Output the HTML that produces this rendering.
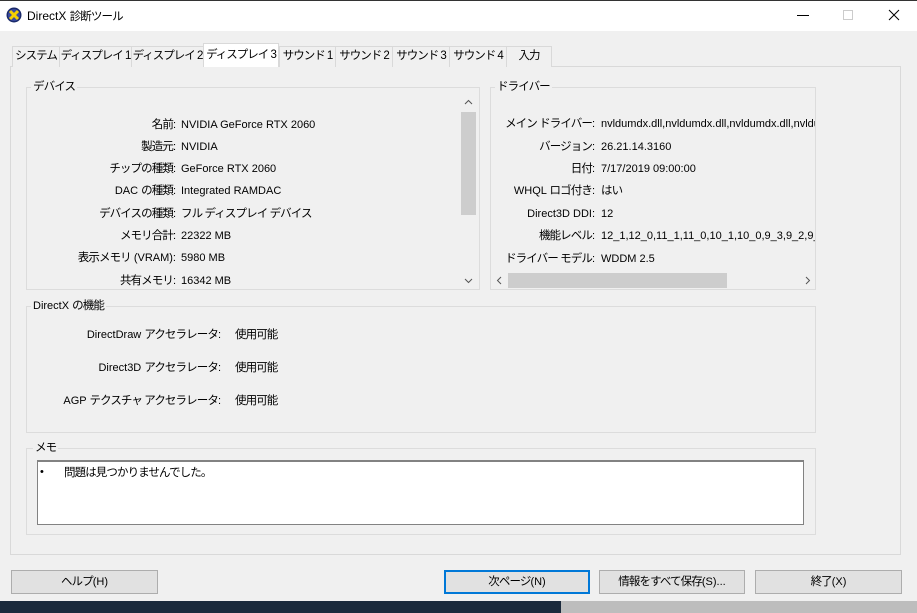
<!DOCTYPE html>
<html><head><meta charset="utf-8"><style>
*{margin:0;padding:0;box-sizing:border-box}
body{width:917px;height:613px;overflow:hidden;background:#f0f0f0;font-family:"Liberation Sans","Noto Sans CJK JP",sans-serif;font-size:11px;color:#000;position:relative}
.a{position:absolute;white-space:nowrap;line-height:15px}
.j{font-size:11.5px;letter-spacing:-0.9px}
.title{left:0;top:0;width:917px;height:31px;background:#fff;border-top:1px solid #333}
.tab{top:46px;height:21px;border:1px solid #d9d9d9;border-bottom:none;background:#f0f0f0;line-height:19px;text-align:center;font-size:11.5px;letter-spacing:-1px}
.panel{left:10px;top:66px;width:891px;height:489px;border:1px solid #d9d9d9;background:#f0f0f0}
.grp{border:1px solid #dcdcdc}
.lg{background:#f0f0f0;padding:0 2px;line-height:14px}
.lab{text-align:right;width:170px}
.btn{top:570px;height:24px;border:1px solid #adadad;background:#e1e1e1;text-align:center;line-height:22px}
</style></head><body>
<div class="a title"></div>
<svg class="a" style="left:6px;top:7px" width="16" height="16" viewBox="0 0 16 16"><circle cx="8" cy="8" r="7.5" fill="#1a2a6a"/><circle cx="8" cy="8" r="6" fill="#3a4aa0"/><path d="M4 4L12 12M12 4L4 12" stroke="#f5d000" stroke-width="3"/></svg>
<div class="a" style="left:27px;top:9px;font-size:12px">DirectX <span class="j">診断ツール</span></div>
<div class="a" style="left:797px;top:15px;width:12px;height:1px;background:#000"></div>
<div class="a" style="left:843px;top:10px;width:10px;height:10px;border:1px solid #ccc"></div>
<svg class="a" style="left:888px;top:9px" width="12" height="12"><path d="M1 1L11 11M11 1L1 11" stroke="#000" stroke-width="1"/></svg>

<div class="a panel"></div>
<div class="a tab" style="left:12px;width:48px">システム</div>
<div class="a tab" style="left:59px;width:73px">ディスプレイ 1</div>
<div class="a tab" style="left:131px;width:73px">ディスプレイ 2</div>
<div class="a tab" style="left:203px;top:43px;height:24px;width:76px;background:#fff;line-height:22px">ディスプレイ 3</div>
<div class="a tab" style="left:279px;width:57px">サウンド 1</div>
<div class="a tab" style="left:335px;width:58px">サウンド 2</div>
<div class="a tab" style="left:392px;width:58px">サウンド 3</div>
<div class="a tab" style="left:449px;width:58px">サウンド 4</div>
<div class="a tab" style="left:506px;width:46px">入力</div>

<div class="a grp" style="left:26px;top:87px;width:454px;height:203px"></div>
<div class="a lg j" style="left:31px;top:80px">デバイス</div>
<div class="a" style="left:460px;top:95px;width:17px;height:194px;background:#f0f0f0"></div>
<div class="a" style="left:461px;top:112px;width:15px;height:103px;background:#cdcdcd"></div>
<svg class="a" style="left:464px;top:99px" width="9" height="6"><path d="M1 5L4.5 1.5L8 5" stroke="#555" fill="none"/></svg>
<svg class="a" style="left:464px;top:278px" width="9" height="6"><path d="M1 1L4.5 4.5L8 1" stroke="#555" fill="none"/></svg>
<div class="a lab" style="left:6px;top:118px"><span class="j">名前</span>:</div><div class="a" style="left:181px;top:118px">NVIDIA GeForce RTX 2060</div>
<div class="a lab" style="left:6px;top:140px"><span class="j">製造元</span>:</div><div class="a" style="left:181px;top:140px">NVIDIA</div>
<div class="a lab" style="left:6px;top:162px"><span class="j">チップの種類</span>:</div><div class="a" style="left:181px;top:162px">GeForce RTX 2060</div>
<div class="a lab" style="left:6px;top:184px">DAC <span class="j">の種類</span>:</div><div class="a" style="left:181px;top:184px">Integrated RAMDAC</div>
<div class="a lab" style="left:6px;top:207px"><span class="j">デバイスの種類</span>:</div><div class="a j" style="left:181px;top:207px">フル ディスプレイ デバイス</div>
<div class="a lab" style="left:6px;top:229px"><span class="j">メモリ合計</span>:</div><div class="a" style="left:181px;top:229px">22322 MB</div>
<div class="a lab" style="left:6px;top:251px"><span class="j">表示メモリ</span> (VRAM):</div><div class="a" style="left:181px;top:251px">5980 MB</div>
<div class="a lab" style="left:6px;top:274px"><span class="j">共有メモリ</span>:</div><div class="a" style="left:181px;top:274px">16342 MB</div>

<div class="a grp" style="left:490px;top:87px;width:326px;height:203px"></div>
<div class="a lg j" style="left:495px;top:80px">ドライバー</div>
<div class="a" style="left:491px;top:95px;width:324px;height:176px;overflow:hidden">
<div class="a lab" style="left:-66px;top:22px"><span class="j">メイン ドライバー</span>:</div><div class="a" style="left:110px;top:22px">nvldumdx.dll,nvldumdx.dll,nvldumdx.dll,nvldumdx.dll</div>
<div class="a lab" style="left:-66px;top:45px"><span class="j">バージョン</span>:</div><div class="a" style="left:110px;top:45px">26.21.14.3160</div>
<div class="a lab" style="left:-66px;top:67px"><span class="j">日付</span>:</div><div class="a" style="left:110px;top:67px">7/17/2019 09:00:00</div>
<div class="a lab" style="left:-66px;top:89px">WHQL <span class="j">ロゴ付き</span>:</div><div class="a j" style="left:110px;top:89px">はい</div>
<div class="a lab" style="left:-66px;top:112px">Direct3D DDI:</div><div class="a" style="left:110px;top:112px">12</div>
<div class="a lab" style="left:-66px;top:134px"><span class="j">機能レベル</span>:</div><div class="a" style="left:110px;top:134px">12_1,12_0,11_1,11_0,10_1,10_0,9_3,9_2,9_1</div>
<div class="a lab" style="left:-66px;top:157px"><span class="j">ドライバー モデル</span>:</div><div class="a" style="left:110px;top:157px">WDDM 2.5</div>
</div>
<div class="a" style="left:491px;top:272px;width:324px;height:17px;background:#f0f0f0"></div>
<div class="a" style="left:508px;top:273px;width:219px;height:15px;background:#cdcdcd"></div>
<svg class="a" style="left:496px;top:276px" width="6" height="9"><path d="M5 1L1.5 4.5L5 8" stroke="#555" fill="none"/></svg>
<svg class="a" style="left:805px;top:276px" width="6" height="9"><path d="M1 1L4.5 4.5L1 8" stroke="#555" fill="none"/></svg>

<div class="a grp" style="left:26px;top:306px;width:790px;height:127px"></div>
<div class="a lg" style="left:31px;top:299px">DirectX <span class="j">の機能</span></div>
<div class="a" style="left:0;top:328px;width:221px;text-align:right">DirectDraw <span class="j">アクセラレータ</span>:</div><div class="a j" style="left:235px;top:328px">使用可能</div>
<div class="a" style="left:0;top:361px;width:221px;text-align:right">Direct3D <span class="j">アクセラレータ</span>:</div><div class="a j" style="left:235px;top:361px">使用可能</div>
<div class="a" style="left:0;top:394px;width:221px;text-align:right">AGP <span class="j">テクスチャ アクセラレータ</span>:</div><div class="a j" style="left:235px;top:394px">使用可能</div>

<div class="a grp" style="left:26px;top:448px;width:790px;height:87px"></div>
<div class="a lg j" style="left:33px;top:441px">メモ</div>
<div class="a" style="left:37px;top:460px;width:767px;height:65px;background:#fff;border:1px solid #828282;border-top:2px solid #828282"></div>
<div class="a" style="left:40px;top:465px">•</div>
<div class="a j" style="left:64px;top:466px">問題は見つかりませんでした。</div>

<div class="a btn" style="left:11px;width:147px;line-height:22px"><span class="j">ヘルプ</span>(H)</div>
<div class="a btn" style="left:444px;width:146px;border:2px solid #0078d7;line-height:20px"><span class="j">次ページ</span>(N)</div>
<div class="a btn" style="left:599px;width:146px;line-height:22px"><span class="j">情報をすべて保存</span>(S)...</div>
<div class="a btn" style="left:755px;width:147px;line-height:22px"><span class="j">終了</span>(X)</div>

<div class="a" style="left:0;top:601px;width:561px;height:12px;background:#1b2a3c"></div>
<div class="a" style="left:561px;top:601px;width:356px;height:12px;background:#bdbdbd"></div>
</body></html>
